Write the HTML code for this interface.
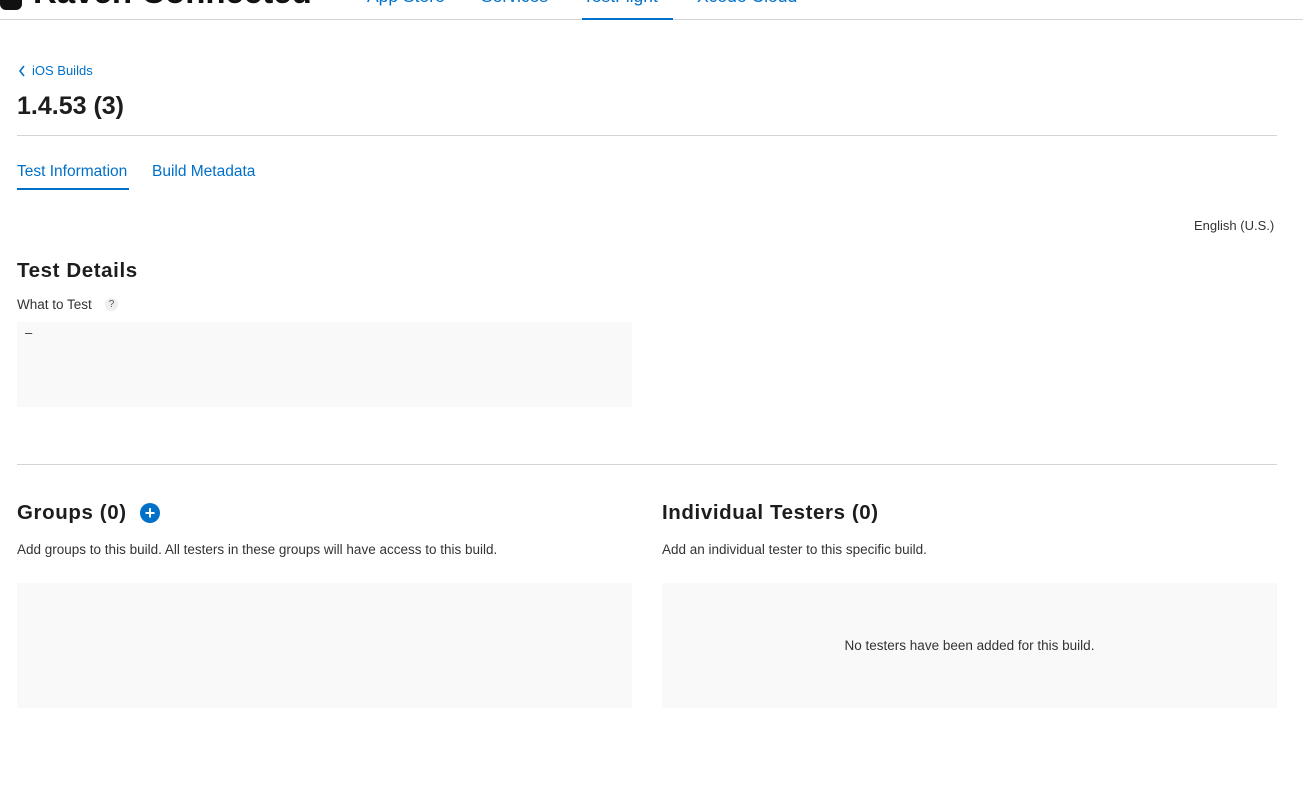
<!DOCTYPE html>
<html><head><meta charset="utf-8"><style>
body{margin:0;width:1303px;height:788px;overflow:hidden;background:#fff;font-family:"Liberation Sans",sans-serif;color:#1d1d1f;position:relative}
.a{position:absolute;white-space:nowrap}
.blue{color:#0070c9}
.line{position:absolute;height:1px;background:#d2d2d7}
.box{position:absolute;background:#f9f9f9}
</style></head><body>
<div class="a" style="left:0;top:-20px;width:22px;height:30px;background:#111;border-radius:6px"></div>
<div class="a" style="left:33px;top:-27px;font-size:33px;font-weight:bold;color:#111">Raven Connected</div>
<div class="a blue" style="left:367px;top:-14px;font-size:17.5px">App Store</div>
<div class="a blue" style="left:481px;top:-14px;font-size:17.5px">Services</div>
<div class="a blue" style="left:583px;top:-14px;font-size:17.5px">TestFlight</div>
<div class="a blue" style="left:697px;top:-14px;font-size:17.5px">Xcode Cloud</div>
<div class="line" style="left:0;top:19px;width:1303px"></div>
<div class="a" style="left:582px;top:18px;width:91px;height:2px;background:#0070c9"></div>

<svg class="a" style="left:18px;top:65px" width="9" height="12"><path d="M6 1 L2 6 L6 11" stroke="#0070c9" stroke-width="1.6" fill="none"/></svg>
<div class="a blue" style="left:32px;top:63px;font-size:13px">iOS Builds</div>
<div class="a" style="left:17px;top:92px;font-size:25px;font-weight:bold">1.4.53 (3)</div>
<div class="line" style="left:17px;top:135px;width:1260px"></div>

<div class="a blue" style="left:17px;top:163px;font-size:15.5px">Test Information</div>
<div class="a" style="left:17px;top:188px;width:112px;height:2px;background:#0070c9"></div>
<div class="a blue" style="left:152px;top:163px;font-size:15.5px">Build Metadata</div>

<div class="a" style="left:1194px;top:218px;font-size:13px;color:#333">English (U.S.)</div>

<div class="a" style="left:17px;top:259px;font-size:20.5px;font-weight:bold;letter-spacing:0.6px">Test Details</div>
<div class="a" style="left:17px;top:297px;font-size:13.5px;color:#333">What to Test</div>
<div class="a" style="left:105px;top:298px;width:13px;height:13px;border-radius:50%;background:#eee;font-size:10px;text-align:center;line-height:13px;color:#555">?</div>
<div class="box" style="left:17px;top:322px;width:615px;height:85px"></div>
<div class="a" style="left:25px;top:325px;font-size:13px;color:#333">–</div>

<div class="line" style="left:17px;top:464px;width:1260px"></div>

<div class="a" style="left:17px;top:501px;font-size:20.5px;font-weight:bold;letter-spacing:0.6px">Groups (0)</div>
<div class="a" style="left:140px;top:503px;width:20px;height:20px;border-radius:50%;background:#0070c9;color:#fff;font-size:18px;font-weight:bold;text-align:center;line-height:20px">+</div>
<div class="a" style="left:17px;top:542px;font-size:13.5px;color:#333">Add groups to this build. All testers in these groups will have access to this build.</div>
<div class="box" style="left:17px;top:583px;width:615px;height:125px"></div>

<div class="a" style="left:662px;top:501px;font-size:20.5px;font-weight:bold;letter-spacing:0.6px">Individual Testers (0)</div>
<div class="a" style="left:662px;top:542px;font-size:13.5px;color:#333">Add an individual tester to this specific build.</div>
<div class="box" style="left:662px;top:583px;width:615px;height:125px"></div>
<div class="a" style="left:662px;top:638px;width:615px;text-align:center;font-size:13.5px;color:#333">No testers have been added for this build.</div>
</body></html>
